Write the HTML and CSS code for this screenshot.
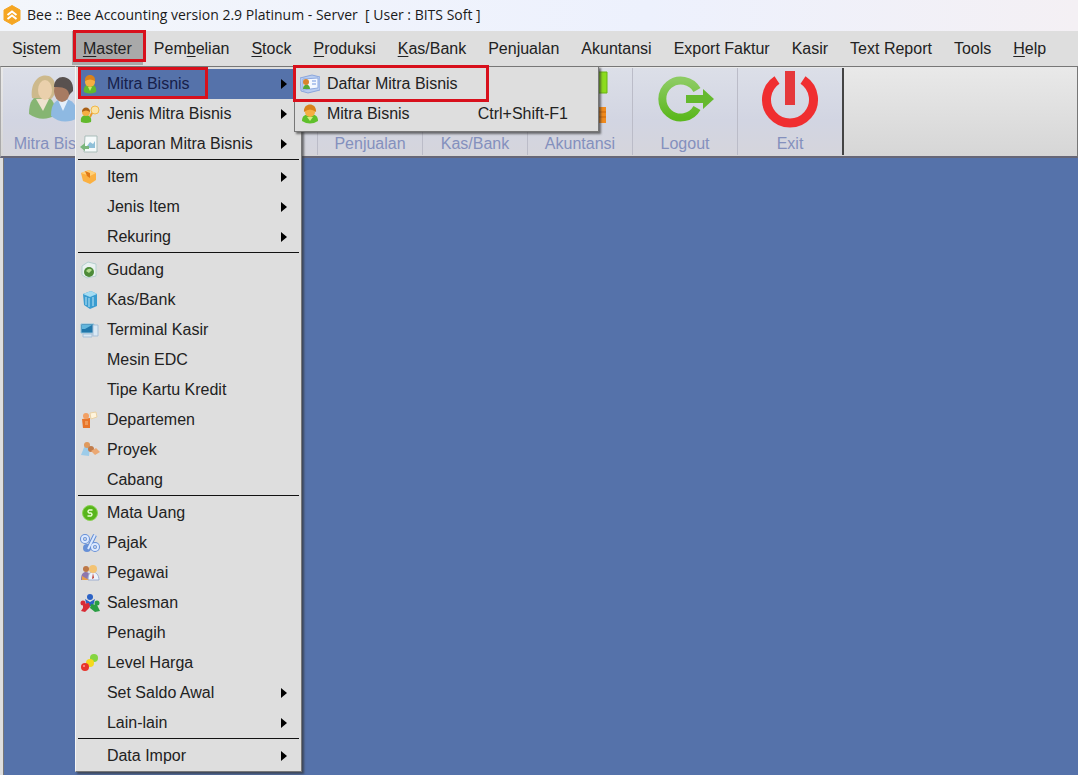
FILE: index.html
```html
<!DOCTYPE html>
<html lang="id">
<head>
    <meta charset="UTF-8">
    <meta name="viewport" content="width=device-width, initial-scale=1.0">
    <title>Bee Accounting</title>
    <link rel="stylesheet" href="styles.css">
</head>
<body>
    <header class="titlebar">
        <svg class="logo" viewBox="0 0 20 20">
            <path d="M10 0.5L18 5v10l-8 4.5L2 15V5z" fill="#f5a623" stroke="#f5a623" stroke-linejoin="round"/>
            <path d="M5.5 10L10 6.500l4.500 3.500M5.500 14L10 10.500l4.500 3.500" fill="none" stroke="#fff" stroke-width="2"/>
        </svg>
        <span>Bee :: Bee Accounting version 2.9 Platinum - Server &nbsp;[ User : BITS Soft ]</span>
    </header>

    <!-- Menu utama -->
    <nav>
        <ul class="menubar">
            <li><button class="menu-btn">S<u>i</u>stem</button></li>
            <li class="open marked">
                <button class="menu-btn"><u>M</u>aster</button>
                <ul class="popup">
                    <li class="selected">
                        <button class="item marked-item">
                            <svg class="icon" viewBox="0 0 20 20"><path d="M4 18c-1-5 2-8 6-8s7 3 6 8q-6 3-12 0z" fill="#62b92b"/><path d="M8 13l2 4 2-4z" fill="#c9e96c"/><ellipse cx="10" cy="8" rx="5" ry="5" fill="#f5ae42"/><path d="M5 7C4-1 16-1 15 7q-5-3-10 0z" fill="#d9821b"/></svg>
                            <span>Mitra Bisnis</span><i class="arrow"></i>
                        </button>
                        <ul class="popup submenu">
                            <li class="marked">
                                <button class="item">
                                    <svg class="icon" viewBox="0 0 20 20"><path d="M0 4l12-3 8 2v13l-12 3-7-2z" fill="#b9cdf0" stroke="#8ba6dc"/><path d="M3 5l15-1v10L3 16z" fill="#f4f8ff" stroke="#8faae0"/><path d="M3 15c0-6 7-6 7 0z" fill="#55a936"/><circle cx="6" cy="8" r="3" fill="#d8832c"/><path d="M12 7h4M12 10h4" stroke="#7195dd"/></svg>
                                    <span>Daftar Mitra Bisnis</span>
                                </button>
                            </li>
                            <li>
                                <button class="item">
                                    <svg class="icon" viewBox="0 0 20 20"><path d="M2 17c0-5 3-7 8-7s8 2 8 7q-8 5-16 0z" fill="#5fc02b"/><path d="M7 13l3 4 3-4z" fill="#d3ee82"/><ellipse cx="10" cy="8" rx="5" ry="5" fill="#f5ae42"/><path d="M4 8C3-2 17-2 16 8q-6-5-12 0z" fill="#d9821b"/></svg>
                                    <span>Mitra Bisnis</span><kbd>Ctrl+Shift-F1</kbd>
                                </button>
                            </li>
                        </ul>
                    </li>
                    <li><button class="item">
                        <svg class="icon" viewBox="0 0 20 20"><path d="M1 18c-1-5 2-7 5-7s6 2 5 7q-5 2-10 0z" fill="#62b92b"/><circle cx="6" cy="8" r="4" fill="#f5ae42"/><path d="M2 8c0-6 8-6 8 0q-4-3-8 0z" fill="#a85f16"/><circle cx="15" cy="6" r="4" fill="#fbe3a5" stroke="#f0b848"/><path d="M12 9l-2 4" stroke="#e89a2c" stroke-width="2"/></svg>
                        <span>Jenis Mitra Bisnis</span><i class="arrow"></i></button></li>
                    <li><button class="item">
                        <svg class="icon" viewBox="0 0 20 20"><path d="M5 2h12v16H4z" fill="#f5fafa" stroke="#a9bdb9"/><path d="M7 12l3-4 3 2 2-3v7H7z" fill="#8fc0d8"/><path d="M0 13l5-4v3h4v3H5v2z" fill="#7ab67c"/></svg>
                        <span>Laporan Mitra Bisnis</span><i class="arrow"></i></button></li>
                    <li class="separator"></li>
                    <li><button class="item">
                        <svg class="icon" viewBox="0 0 20 20"><path d="M1 6l8-3 7 3v7l-6 4-7-3z" fill="#fbb040"/><path d="M1 6l8-3 7 3-6 3z" fill="#ffd078"/><path d="M5 4l5 2v5L7 9z" fill="#df7816"/></svg>
                        <span>Item</span><i class="arrow"></i></button></li>
                    <li><button class="item"><span>Jenis Item</span><i class="arrow"></i></button></li>
                    <li><button class="item"><span>Rekuring</span><i class="arrow"></i></button></li>
                    <li class="separator"></li>
                    <li><button class="item">
                        <svg class="icon" viewBox="0 0 20 20"><path d="M2 6l6-4 8 2v12l-9 2-5-3z" fill="#e9f1f0" stroke="#b5cfcf"/><circle cx="9" cy="12" r="5" fill="#4d8b38"/><path d="M6 11q3-4 6-1l-3 3z" fill="#b2dc8e"/></svg>
                        <span>Gudang</span></button></li>
                    <li><button class="item">
                        <svg class="icon" viewBox="0 0 20 20"><path d="M3 4l8-3 6 3v12l-7 3-6-4z" fill="#3a9cd0"/><path d="M3 4l8-3 6 3-7 3z" fill="#a5dcf2"/><path d="M6 7v8M9 8v9M13 7v9" stroke="#bce6f7"/></svg>
                        <span>Kas/Bank</span></button></li>
                    <li><button class="item">
                        <svg class="icon" viewBox="0 0 20 20"><path d="M1 4h13v9H1z" fill="#2177aa" stroke="#8cc2dc"/><path d="M2 5h10l-7 4H2z" fill="#63b6dc"/><path d="M13 5h5v11h-5zM3 14h9v3H3z" fill="#d9e8f4" stroke="#a7c0d7"/></svg>
                        <span>Terminal Kasir</span></button></li>
                    <li><button class="item"><span>Mesin EDC</span></button></li>
                    <li><button class="item"><span>Tipe Kartu Kredit</span></button></li>
                    <li><button class="item">
                        <svg class="icon" viewBox="0 0 20 20"><path d="M2 9l8-1v10H3z" fill="#e8752a"/><circle cx="6" cy="6" r="3" fill="#f2a064"/><path d="M10 3l6-1 1 5-6 2z" fill="#fff4dc" stroke="#ead1a4"/><path d="M5 11h3v4H5z" fill="#f09a58"/></svg>
                        <span>Departemen</span></button></li>
                    <li><button class="item">
                        <svg class="icon" viewBox="0 0 20 20"><path d="M1 15l4-10 5 2-1 9z" fill="#9dcce9"/><circle cx="7" cy="5" r="3" fill="#e09a5d"/><circle cx="11" cy="9" r="3" fill="#c17c4b"/><path d="M11 11l5-3 4 4-5 3z" fill="#eba873"/></svg>
                        <span>Proyek</span></button></li>
                    <li><button class="item"><span>Cabang</span></button></li>
                    <li class="separator"></li>
                    <li><button class="item">
                        <svg class="icon" viewBox="0 0 20 20"><circle cx="10" cy="10" r="7.500" fill="#58b51c" stroke="#8bd254"/><path d="M12.500 7H9q-2 1.500 0 3h2q2 1.500 0 3H7.500" fill="none" stroke="#e9ffd3" stroke-width="1.500"/></svg>
                        <span>Mata Uang</span></button></li>
                    <li><button class="item">
                        <svg class="icon" viewBox="0 0 20 20" fill="none"><g stroke="#6790d7" stroke-width="4"><circle cx="5" cy="6" r="3"/><circle cx="15" cy="14" r="3"/><circle cx="7" cy="15" r="2"/><path d="M15 2L8 16"/></g><g stroke="#dce9ff" stroke-width="2"><circle cx="5" cy="6" r="3"/><circle cx="15" cy="14" r="3"/><path d="M15 2L8 16"/></g></svg>
                        <span>Pajak</span></button></li>
                    <li><button class="item">
                        <svg class="icon" viewBox="0 0 20 20"><path d="M1 17c0-6 2-8 5-8s4 3 4 8z" fill="#8e78ad"/><circle cx="6" cy="6" r="3" fill="#bd7848"/><path d="M8 17c0-6 2-8 5-8s6 3 6 8z" fill="#edf2fb" stroke="#9eaed0"/><circle cx="13" cy="6" r="4" fill="#f3c373"/><path d="M2 13l7 4H2z" fill="#e8a04e"/><path d="M13 10l1 5-2 1z" fill="#bd3d34"/></svg>
                        <span>Pegawai</span></button></li>
                    <li><button class="item">
                        <svg class="icon" viewBox="0 0 20 20"><g fill="#2c62c5"><circle cx="10" cy="4" r="3"/><path d="M5 6l5 3 5-3-2 7H7z"/></g><g fill="#d92b35"><circle cx="3" cy="10" r="2.500"/><path d="M3 11l6-1 1 4-5 5-4-1 2-3z"/></g><g fill="#2a9d43"><circle cx="17" cy="10" r="2.500"/><path d="M11 11l6 1 3 6-5 1-5-4z"/></g></svg>
                        <span>Salesman</span></button></li>
                    <li><button class="item"><span>Penagih</span></button></li>
                    <li><button class="item">
                        <svg class="icon" viewBox="0 0 20 20"><circle cx="14" cy="5" r="4" fill="#85d541"/><circle cx="10" cy="10" r="4" fill="#f5d91c"/><circle cx="5" cy="14" r="4" fill="#e8362c"/><circle cx="4" cy="13" r="1" fill="#ff9c90"/></svg>
                        <span>Level Harga</span></button></li>
                    <li><button class="item"><span>Set Saldo Awal</span><i class="arrow"></i></button></li>
                    <li><button class="item"><span>Lain-lain</span><i class="arrow"></i></button></li>
                    <li class="separator"></li>
                    <li><button class="item"><span>Data Impor</span><i class="arrow"></i></button></li>
                </ul>
            </li>
            <li><button class="menu-btn">Pem<u>b</u>elian</button></li>
            <li><button class="menu-btn"><u>S</u>tock</button></li>
            <li><button class="menu-btn"><u>P</u>roduksi</button></li>
            <li><button class="menu-btn"><u>K</u>as/Bank</button></li>
            <li><button class="menu-btn">Penjualan</button></li>
            <li><button class="menu-btn">Akuntansi</button></li>
            <li><button class="menu-btn">Export Faktur</button></li>
            <li><button class="menu-btn">Kasir</button></li>
            <li><button class="menu-btn">Text Report</button></li>
            <li><button class="menu-btn">Tools</button></li>
            <li><button class="menu-btn"><u>H</u>elp</button></li>
        </ul>
    </nav>

    <!-- Toolbar -->
    <div class="toolbar">
        <div class="tools">
            <button class="tool">
                <svg class="tool-icon" viewBox="0 0 56 56">
                    <path d="M2 43c0-13 4-18 13-18s13 5 14 19q-14 8-27-1z" fill="#86b573"/>
                    <path d="M9 28l7 12 6-12z" fill="#eee2cf"/>
                    <path d="M5 27C2 1 27-1 28 14c1 7-1 12-4 14z" fill="#cdb98c"/>
                    <ellipse cx="18" cy="19" rx="7" ry="10" fill="#ead0ac"/>
                    <path d="M24 45c0-13 5-17 13-17s14 6 14 19q-15 8-27-2z" fill="#8eb9e2"/>
                    <path d="M31 29l5 11 5-11z" fill="#e4effa"/>
                    <ellipse cx="35" cy="20" rx="8" ry="11" fill="#a77b62"/>
                    <path d="M27 16C27 1 48 3 46 20l-4 4q0-9-15-8z" fill="#58514f"/>
                </svg>
                <span>Mitra Bisnis</span>
            </button>
            <button class="tool" aria-label="Item"></button>
            <button class="tool" aria-label="Pembelian"></button>
            <button class="tool"><span>Penjualan</span></button>
            <button class="tool"><span>Kas/Bank</span></button>
            <button class="tool">
                <svg class="tool-icon" viewBox="0 0 56 56">
                    <path d="M28 1h27v21H28z" fill="#8cdc1e" stroke="#68b414"/>
                    <path d="M28 36h26v16H28z" fill="#f08a1d"/>
                    <path d="M28 41h26M28 46h26" stroke="#c9660c"/>
                </svg>
                <span>Akuntansi</span>
            </button>
            <button class="tool">
                <svg class="tool-icon" viewBox="0 0 56 56">
                    <defs><linearGradient id="green" x2="0" y2="1"><stop offset="0" stop-color="#8ccb62"/><stop offset="1" stop-color="#5cb81e"/></linearGradient></defs>
                    <path d="M40 19A18.500 18.500 0 1 0 40 37" fill="none" stroke="url(#green)" stroke-width="8"/>
                    <path d="M29 24h17v-6l11 10-11 10v-6H29z" fill="#65b92e"/>
                </svg>
                <span>Logout</span>
            </button>
            <button class="tool">
                <svg class="tool-icon" viewBox="0 0 56 56">
                    <path d="M15 9A23.500 23.500 0 1 0 41 9" fill="none" stroke="#f02e30" stroke-width="9"/>
                    <path d="M23 0h10v34H23z" fill="#e5383b"/>
                </svg>
                <span>Exit</span>
            </button>
        </div>
    </div>

    <main class="desktop"></main>
</body>
</html>
```
FILE: styles.css
```css
* {
    box-sizing: border-box;
}

body {
    margin: 0;
    min-height: 100vh;
    display: flex;
    flex-direction: column;
    overflow: hidden;
    font-family: "Liberation Sans", Arial, sans-serif;
    font-size: 16px;
    color: #222;
    background: #dedede;
}

ul {
    list-style: none;
    margin: 0;
    padding: 0;
}

button {
    font: inherit;
    color: inherit;
    background: none;
    border: none;
    padding: 0;
    text-align: left;
}

/* Judul jendela */
.titlebar {
    display: flex;
    align-items: center;
    gap: 5px;
    height: 31px;
    padding: 0 2px 2px;
    font-family: "Open Sans", sans-serif;
    font-size: 14px;
    color: #1a1a1a;
    background: linear-gradient(90deg, #f3f6fb, #edf1fd 60%, #f4f0f4);
}

.logo {
    width: 20px;
    height: 20px;
}

/* Menu */
.menubar {
    display: flex;
    height: 35px;
    padding: 0 1px;
    background: #dedede;
}

.menubar > li {
    position: relative;
}

.menu-btn {
    height: 34px;
    padding: 1px 11px 0;
    white-space: nowrap;
}

.menu-btn u {
    text-underline-offset: 2px;
}

.open > .menu-btn {
    background: #a9a9a9;
}

/* Kotak penanda merah */
.marked::before,
.marked-item::after {
    content: "";
    position: absolute;
    z-index: 3;
    border: 3px solid #d8101c;
    pointer-events: none;
}

.open::before {
    inset: -1px -3px 4px 1px;
}

.submenu .marked::before {
    inset: -4px 107px -3px -4px;
}

.marked-item::after {
    inset: -2px 91px 0 0;
}

.popup {
    position: absolute;
    top: 100%;
    left: 3px;
    z-index: 2;
    width: 227px;
    padding: 2px 2px 0;
    background: #dedede;
    border: 1px solid #777;
    border-left-color: #f5f5f5;
    box-shadow: 2px 2px 2px #333a;
}

.popup li {
    position: relative;
}

.item {
    display: flex;
    align-items: center;
    width: 100%;
    height: 30px;
    padding: 0 12px 0 29px;
    white-space: nowrap;
}

.item .icon {
    width: 20px;
    height: 20px;
    margin: 0 7px 0 -27px;
}

.item kbd {
    margin-left: auto;
    padding-right: 16px;
    font: inherit;
}

.selected > .item {
    color: #16204a;
    background: #5572aa;
}

.arrow {
    margin-left: auto;
    border: 5px solid transparent;
    border-left: 6px solid #000;
    border-right: none;
}

.separator {
    height: 3px;
    border-top: 1px solid #111;
}

.submenu {
    top: -3px;
    left: 100%;
    width: 305px;
    margin-left: -5px;
    padding-bottom: 2px;
    border-left-color: #777;
}

.submenu .item {
    padding-left: 30px;
}

/* Toolbar */
.toolbar {
    display: flex;
    padding: 1px 1px 1px 2px;
    border: 1px solid #777;
    border-left-color: #aaa;
    border-bottom: 2px solid #667;
    background: linear-gradient(#e9e9e9, #d6d6d6);
}

.tools {
    display: flex;
    border-right: 2px solid #444;
    background: linear-gradient(#dcdfe8, #d2d5e2 60%, #d5d5dc);
}

.tool {
    display: flex;
    flex-direction: column;
    align-items: center;
    justify-content: flex-end;
    width: 105px;
    height: 87px;
    padding: 2px 0;
    border-right: 1px solid #bbbcc8;
    color: #8490bd;
}

.tool:last-child {
    width: 104px;
    border-right: none;
}

.tool-icon {
    width: 56px;
    height: 56px;
    margin-bottom: 8px;
    overflow: visible;
}

.desktop {
    flex: 1;
    margin-left: 3px;
    border-left: 1px solid #777;
    background: #5572aa;
}
```
